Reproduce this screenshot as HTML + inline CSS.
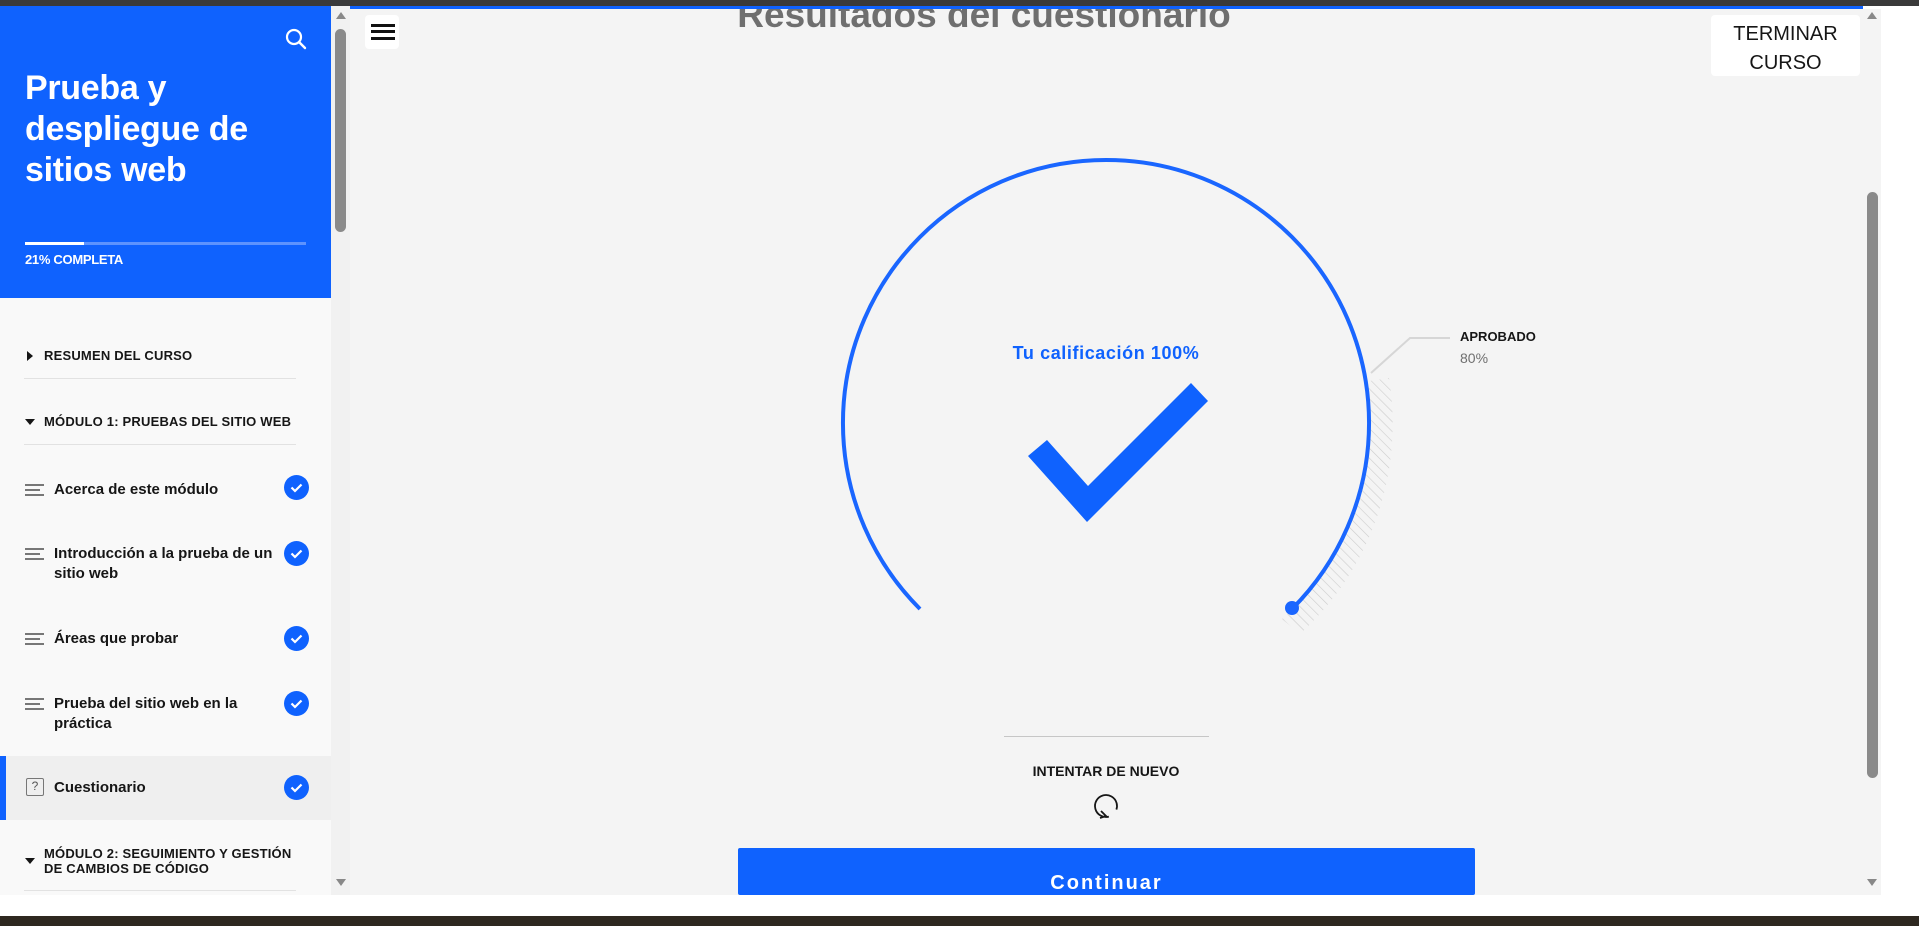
<!DOCTYPE html>
<html><head><meta charset="utf-8">
<style>
*{margin:0;padding:0;box-sizing:border-box}
body{width:1919px;height:926px;overflow:hidden;position:relative;background:#fff;font-family:"Liberation Sans",sans-serif}
.abs{position:absolute}
.topbar{left:0;top:0;width:1919px;height:6px;background:#3a3a3a}
.botbar{left:0;top:916px;width:1919px;height:10px;background:#2e2820}
.side{left:0;top:6px;width:331px;height:889px;background:#f9f9f9;overflow:hidden}
.hero{left:0;top:0;width:331px;height:292px;background:#0f62fe}
.htitle{left:25px;top:62px;color:#fff;font-weight:bold;font-size:34px;line-height:41px;width:290px;letter-spacing:-.3px}
.sec{left:44px;font-size:13px;font-weight:bold;color:#161616;letter-spacing:.2px}
.tri{left:25px;width:0;height:0}
.div{left:24px;width:272px;height:1px;background:#e2e2e2}
.item{left:54px;font-size:15px;font-weight:bold;color:#161616;line-height:20px;width:225px}
.lines{left:25px;width:19px}
.lines i{display:block;height:2px;background:#777;margin-bottom:3px}
.chk{left:284px;width:25px;height:25px;border-radius:50%;background:#0f62fe}
.main{left:350px;top:6px;width:1513px;height:889px;background:#f4f4f4;overflow:hidden}
</style></head><body>
<div class="abs topbar"></div>
<div class="abs side">
  <div class="abs hero">
    <svg class="abs" style="left:285px;top:22px" width="22" height="22" viewBox="0 0 22 22"><circle cx="9" cy="9" r="7" fill="none" stroke="#fff" stroke-width="2.2"/><line x1="14" y1="14" x2="20" y2="20" stroke="#fff" stroke-width="2.4" stroke-linecap="round"/></svg>
    <div class="abs htitle">Prueba y despliegue de sitios web</div>
    <div class="abs" style="left:25px;top:236px;width:281px;height:3px;background:#5d93fe"></div>
    <div class="abs" style="left:25px;top:236px;width:59px;height:3px;background:#fff"></div>
    <div class="abs" style="left:25px;top:246px;color:#fff;font-size:13px;font-weight:bold;letter-spacing:-.3px">21% COMPLETA</div>
  </div>
  <div class="abs tri" style="top:345px;border-top:5px solid transparent;border-bottom:5px solid transparent;border-left:6px solid #161616;left:27px"></div>
  <div class="abs sec" style="top:342px">RESUMEN DEL CURSO</div>
  <div class="abs div" style="top:372px"></div>
  <div class="abs tri" style="top:413px;border-left:5px solid transparent;border-right:5px solid transparent;border-top:6px solid #161616"></div>
  <div class="abs sec" style="top:408px">MÓDULO 1: PRUEBAS DEL SITIO WEB</div>
  <div class="abs div" style="top:438px"></div>

  <div class="abs lines" style="top:478px"><i></i><i style="width:15px"></i><i></i></div>
  <div class="abs item" style="top:474px">Acerca de este módulo</div>
  <div class="abs chk" style="top:469px"><svg width="25" height="25"><path d="M7.5 12.5l3.5 3.5 6.5-6.5" fill="none" stroke="#fff" stroke-width="2.2"/></svg></div>

  <div class="abs lines" style="top:542px"><i></i><i style="width:15px"></i><i></i></div>
  <div class="abs item" style="top:538px">Introducción a la prueba de un sitio web</div>
  <div class="abs chk" style="top:535px"><svg width="25" height="25"><path d="M7.5 12.5l3.5 3.5 6.5-6.5" fill="none" stroke="#fff" stroke-width="2.2"/></svg></div>

  <div class="abs lines" style="top:627px"><i></i><i style="width:15px"></i><i></i></div>
  <div class="abs item" style="top:623px">Áreas que probar</div>
  <div class="abs chk" style="top:620px"><svg width="25" height="25"><path d="M7.5 12.5l3.5 3.5 6.5-6.5" fill="none" stroke="#fff" stroke-width="2.2"/></svg></div>

  <div class="abs lines" style="top:692px"><i></i><i style="width:15px"></i><i></i></div>
  <div class="abs item" style="top:688px">Prueba del sitio web en la práctica</div>
  <div class="abs chk" style="top:685px"><svg width="25" height="25"><path d="M7.5 12.5l3.5 3.5 6.5-6.5" fill="none" stroke="#fff" stroke-width="2.2"/></svg></div>

  <div class="abs" style="left:0;top:750px;width:331px;height:64px;background:#efefef"></div>
  <div class="abs" style="left:0;top:750px;width:6px;height:64px;background:#0f62fe"></div>
  <div class="abs" style="left:26px;top:772px;width:18px;height:18px;border:1.5px solid #777;border-radius:2px;font-size:12px;color:#555;text-align:center;line-height:15px">?</div>
  <div class="abs item" style="top:772px">Cuestionario</div>
  <div class="abs chk" style="top:769px"><svg width="25" height="25"><path d="M7.5 12.5l3.5 3.5 6.5-6.5" fill="none" stroke="#fff" stroke-width="2.2"/></svg></div>

  <div class="abs tri" style="top:852px;border-left:5px solid transparent;border-right:5px solid transparent;border-top:6px solid #161616"></div>
  <div class="abs sec" style="top:840px;line-height:15px;width:260px">MÓDULO 2: SEGUIMIENTO Y GESTIÓN DE CAMBIOS DE CÓDIGO</div>
  <div class="abs div" style="top:884px"></div>
</div>
<div class="abs" style="left:331px;top:6px;width:19px;height:889px;background:#f1f1f1"></div>
<div class="abs" style="left:336px;top:12px;width:0;height:0;border-left:5px solid transparent;border-right:5px solid transparent;border-bottom:7px solid #888"></div>
<div class="abs" style="left:335px;top:29px;width:11px;height:203px;background:#8a8a8a;border-radius:6px"></div>
<div class="abs" style="left:336px;top:879px;width:0;height:0;border-left:5px solid transparent;border-right:5px solid transparent;border-top:7px solid #888"></div>

<div class="abs main">
  <div class="abs" style="left:0;top:0;width:1531px;height:3px;background:#0f62fe;z-index:3"></div>
  <div class="abs" style="left:234px;top:-12px;width:800px;text-align:center;font-size:37px;font-weight:bold;color:#6f6f6f">Resultados del cuestionario</div>
  <div class="abs" style="left:15px;top:9px;width:34px;height:34px;background:#fff;border-radius:4px"></div>
  <div class="abs" style="left:21px;top:18px;width:24px;height:3px;background:#111"></div>
  <div class="abs" style="left:21px;top:24px;width:24px;height:3px;background:#111"></div>
  <div class="abs" style="left:21px;top:31px;width:24px;height:3px;background:#111"></div>
  <div class="abs" style="left:1361px;top:9px;width:149px;height:61px;background:#fff;border-radius:4px;text-align:center;font-size:20px;line-height:29px;color:#161616;padding-top:5px">TERMINAR<br>CURSO</div>
</div>
<svg class="abs" style="left:0;top:0" width="1919" height="926">
  <defs><pattern id="h" width="7" height="7" patternUnits="userSpaceOnUse" patternTransform="rotate(-45)"><line x1="0" y1="0" x2="0" y2="7" stroke="#ccc" stroke-width="1.2"/></pattern></defs>
  <path d="M1366.8 381.4 A263 263 0 0 1 1282 619 L1300 634 A285 285 0 0 0 1389 378 Z" fill="url(#h)"/>
  <polyline points="1371,373 1410,338 1450,338" fill="none" stroke="#d6d6d6" stroke-width="2"/>
  <path d="M920 609 A263 263 0 1 1 1292 609" fill="none" stroke="#1a66ff" stroke-width="4"/>
  <circle cx="1292" cy="608" r="7" fill="#1a66ff"/>
  <polygon points="1028,456 1047,440 1088,486 1191,383 1208,401 1087,522" fill="#0f62fe"/>
  <circle cx="1106" cy="806" r="11" fill="none" stroke="#161616" stroke-width="1.8" stroke-dasharray="58 11" transform="rotate(75 1106 806)"/>
  <path d="M1101 811 l5 5 l-6 2" fill="none" stroke="#161616" stroke-width="1.8"/>
</svg>
<div class="abs" style="left:1460px;top:329px;font-size:13px;font-weight:bold;color:#161616">APROBADO</div>
<div class="abs" style="left:1460px;top:350px;font-size:14px;color:#6f6f6f">80%</div>
<div class="abs" style="left:900px;top:343px;width:412px;text-align:center;font-size:18px;font-weight:bold;color:#0f62fe;letter-spacing:.6px">Tu calificación 100%</div>
<div class="abs" style="left:1004px;top:736px;width:205px;height:1px;background:#c6c6c6"></div>
<div class="abs" style="left:900px;top:763px;width:412px;text-align:center;font-size:14px;font-weight:bold;color:#161616">INTENTAR DE NUEVO</div>
<div class="abs" style="left:738px;top:848px;width:737px;height:47px;background:#0f62fe;border-radius:2px"></div>
<div class="abs" style="left:738px;top:872px;width:737px;text-align:center;font-size:20px;font-weight:bold;color:#fff;letter-spacing:2px">Continuar</div>
<div class="abs" style="left:1863px;top:9px;width:18px;height:886px;background:#f4f4f4"></div>
<div class="abs" style="left:1867px;top:12px;width:0;height:0;border-left:5px solid transparent;border-right:5px solid transparent;border-bottom:7px solid #888"></div>
<div class="abs" style="left:1867px;top:192px;width:11px;height:586px;background:#8a8a8a;border-radius:6px"></div>
<div class="abs" style="left:1867px;top:879px;width:0;height:0;border-left:5px solid transparent;border-right:5px solid transparent;border-top:7px solid #888"></div>
<div class="abs" style="left:0;top:895px;width:1919px;height:21px;background:#fff"></div>
<div class="abs botbar"></div>
</body></html>
